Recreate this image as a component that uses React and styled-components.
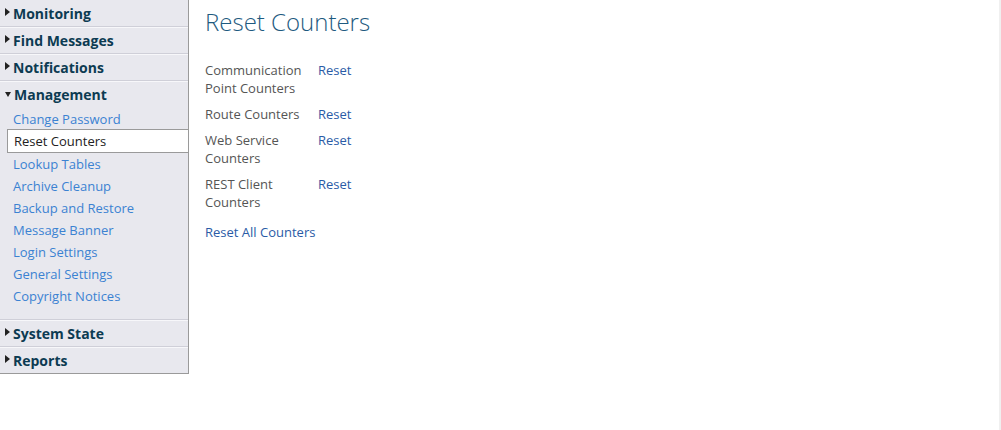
import styled, { createGlobalStyle } from "styled-components";

const GlobalStyle = createGlobalStyle`
  html, body {
    margin: 0;
    padding: 0;
    background: #ffffff;
    font-family: "Open Sans", "Liberation Sans", sans-serif;
  }
`;

const Page = styled.div`
  display: flex;
  align-items: flex-start;
  width: 1001px;
  height: 430px;
  box-sizing: border-box;
  border-right: 2px solid #f0f0f0;
`;

const Sidebar = styled.nav`
  width: 189px;
  flex-shrink: 0;
  background: #e8e8ee;
  border-right: 1px solid #9a9a9a;
  border-bottom: 1px solid #9a9a9a;
  box-sizing: border-box;
`;

const Section = styled.div`
  border-top: ${(p) => (p.first ? "none" : "1px solid #cfcfd8")};
  box-shadow: ${(p) => (p.first ? "none" : "inset 0 1px 0 #f7f7fa")};
`;

const Header = styled.div`
  display: flex;
  align-items: center;
  height: 26px;
  padding-left: 5px;
  font-size: 14px;
  font-weight: 700;
  color: #0c3b52;
  cursor: pointer;
`;

const Arrow = styled.span`
  display: inline-block;
  width: 0;
  height: 0;
  margin-right: 3px;
  ${(p) =>
    p.open
      ? `border-left: 3px solid transparent;
         border-right: 3px solid transparent;
         border-top: 5px solid #222;
         margin-top: 0;`
      : `border-top: 4px solid transparent;
         border-bottom: 4px solid transparent;
         border-left: 5px solid #222;
         margin-top: -2px;`}
`;

const Items = styled.div`
  display: flex;
  flex-direction: column;
  padding: 1px 0 12px;
`;

const Item = styled.a`
  display: block;
  box-sizing: border-box;
  height: ${(p) => (p.active ? "24px" : "22px")};
  line-height: 22px;
  margin: ${(p) => (p.active ? "-1px 0 0 7px" : "0")};
  font-size: 13px;
  color: ${(p) => (p.active ? "#222" : "#3b82d2")};
  background: ${(p) => (p.active ? "#fff" : "transparent")};
  border: ${(p) => (p.active ? "1px solid #9a9a9a" : "none")};
  border-right: none;
  padding-left: ${(p) => (p.active ? "6px" : "13px")};
  cursor: pointer;
`;

const Main = styled.main`
  padding: 4px 0 0 16px;
`;

const Title = styled.h1`
  margin: 0 0 21px;
  font-size: 24px;
  font-weight: 300;
  color: #1e5a80;
  line-height: 36px;
`;

const Table = styled.div`
  display: grid;
  grid-template-columns: 113px auto;
  row-gap: 8px;
  font-size: 13px;
  line-height: 18px;
`;

const Label = styled.div`
  color: #555;
  width: 100px;
`;

const Link = styled.a`
  color: #2a5ba6;
  cursor: pointer;
`;

const ResetAll = styled(Link)`
  display: block;
  margin-top: 12px;
  font-size: 13px;
  line-height: 18px;
`;

const sections = [
  { name: "Monitoring" },
  { name: "Find Messages" },
  { name: "Notifications" },
  {
    name: "Management",
    open: true,
    items: [
      "Change Password",
      "Reset Counters",
      "Lookup Tables",
      "Archive Cleanup",
      "Backup and Restore",
      "Message Banner",
      "Login Settings",
      "General Settings",
      "Copyright Notices",
    ],
  },
  { name: "System State" },
  { name: "Reports" },
];

const counters = [
  "Communication Point Counters",
  "Route Counters",
  "Web Service Counters",
  "REST Client Counters",
];

const App = () => {
  return (
    <>
      <GlobalStyle />
      <Page>
        <Sidebar>
          {sections.map((s, i) => (
            <Section key={s.name} first={i === 0}>
              <Header>
                <Arrow open={s.open} />
                {s.name}
              </Header>
              {s.items && (
                <Items>
                  {s.items.map((it) => (
                    <Item key={it} active={it === "Reset Counters"}>
                      {it}
                    </Item>
                  ))}
                </Items>
              )}
            </Section>
          ))}
        </Sidebar>
        <Main>
          <Title>Reset Counters</Title>
          <Table>
            {counters.map((c) => [
              <Label key={c}>{c}</Label>,
              <Link key={c + "-r"}>Reset</Link>,
            ])}
          </Table>
          <ResetAll>Reset All Counters</ResetAll>
        </Main>
      </Page>
    </>
  );
};

export default App;
